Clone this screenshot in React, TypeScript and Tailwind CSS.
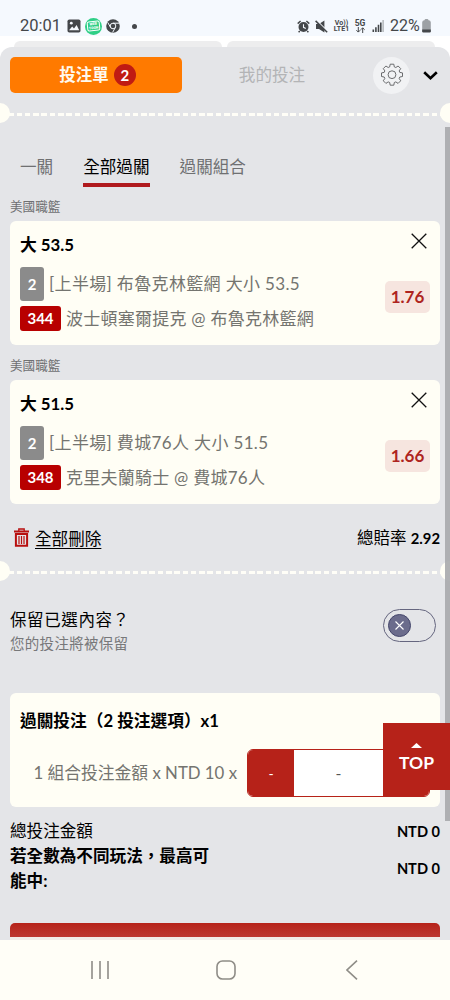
import { useState } from 'react'
import { clsx } from 'clsx'

interface Bet {
  league: string
  pick: string
  market: string
  code: string
  match: string
  odds: string
}

const BETS: Bet[] = [
  { league: '美國職籃', pick: '大 53.5', market: '[上半場] 布魯克林籃網 大小 53.5', code: '344', match: '波士頓塞爾提克 @ 布魯克林籃網', odds: '1.76' },
  { league: '美國職籃', pick: '大 51.5', market: '[上半場] 費城76人 大小 51.5', code: '348', match: '克里夫蘭騎士 @ 費城76人', odds: '1.66' },
]

const TABS = ['一關', '全部過關', '過關組合']

function StatusBar() {
  return (
    <div className="h-9 shrink-0 bg-[#f5f9fe] flex items-end pl-5 pr-[19px] text-[#44474a] font-[Roboto,sans-serif]">
      <div className="flex items-center h-[20px]">
        <span className="w-[40px] text-[16.5px] leading-5 whitespace-nowrap">20:01</span>
        <svg className="ml-[7px]" width="14" height="14" viewBox="0 0 14 14">
          <rect x=".5" y=".5" width="13" height="13" rx="1.8" fill="#44474a" />
          <circle cx="4.3" cy="4.2" r="1.4" fill="#f5f9fe" />
          <path d="M2 11.3 5.2 7.6 7 9.5 9.6 6.1 12.2 11.3Z" fill="#f5f9fe" />
        </svg>
        <span className="ml-[4px] w-[17px] h-[17px] rounded-full bg-[#2fcf86] flex items-center justify-center">
          <span className="w-[13px] h-[10px] -rotate-6 rounded-[2px] border border-white text-white font-black flex flex-col items-center justify-center">
            <span className="text-[3.5px] leading-[4px]">WEB</span>
            <span className="text-[3.5px] leading-[4px]">TOON</span>
          </span>
        </span>
        <svg className="ml-[4px]" width="14" height="14" viewBox="0 0 14 14">
          <circle cx="7" cy="7" r="6.8" fill="#44474a" />
          <g fill="none" stroke="#f5f9fe" strokeWidth="1">
            <circle cx="7" cy="7" r="2.8" />
            <path d="M7 4.2h6M4.6 8.4 1.7 3.4M9.4 8.4 6.6 13.4" />
          </g>
        </svg>
        <span className="ml-[12px] w-[5px] h-[5px] rounded-full bg-[#44474a]" />
      </div>
      <div className="ml-auto flex items-center h-[20px]">
        <svg width="13" height="13" viewBox="0 0 13 13">
          <circle cx="6.5" cy="7" r="5" fill="#44474a" />
          <path d="M.7 3.6 3.6 1M12.3 3.6 9.4 1M2.8 11 1.6 12.3M10.2 11l1.2 1.3" stroke="#44474a" strokeWidth="1.5" />
          <path d="M6.5 4.2V7.3L8.8 8.5" stroke="#f5f9fe" strokeWidth="1.1" fill="none" />
        </svg>
        <svg className="ml-[5px]" width="13" height="13" viewBox="0 0 13 13">
          <path d="M1 4h3l5.4-3.6v12L4 9H1z" fill="#44474a" />
          <path d="M1.4 .2 13 11.6" stroke="#f5f9fe" strokeWidth="1.2" />
          <path d="M.6 .9 12.2 12.3" stroke="#44474a" strokeWidth="1.5" />
        </svg>
        <span className="ml-[5px] w-[17px] text-[7px] leading-[6.5px] font-bold text-center whitespace-nowrap">Vo))<br />LTE1</span>
        <span className="ml-[4px] w-[12px] flex flex-col items-center">
          <span className="text-[8.5px] leading-[7px] font-bold">5G</span>
          <svg width="9" height="6" viewBox="0 0 9 6" fill="none" stroke="#44474a" strokeWidth="1">
            <path d="M2.3 0v5M.4 3.2l1.9 1.9 1.9-1.9M6.7 6V1M4.8 2.7 6.7.8l1.9 1.9" />
          </svg>
        </span>
        <svg className="ml-[6px]" width="12" height="12" viewBox="0 0 12 12" fill="#44474a">
          <path d="M.5 9.5h1.6V12H.5zM3.1 7.2h1.6V12H3.1zM5.7 4.8h1.6V12H5.7zM8 2.4h1.6V12H8z" />
          <path d="M10.4 0h1.4v12h-1.4z" fill="#aeb2b5" />
        </svg>
        <span className="ml-[6px] w-[30px] text-[16px] leading-5 whitespace-nowrap">22%</span>
        <svg className="ml-[2px]" width="9" height="14" viewBox="0 0 9 14">
          <path d="M2.5 1.2A1.2 1.2 0 0 1 3.5 0h2a1.2 1.2 0 0 1 1 1.2 2.2 2.2 0 0 1 2.3 2V13H.2V3.2a2.2 2.2 0 0 1 2.3-2z" fill="#9da1a5" />
          <path d="M.2 10.5h8.6v2a1 1 0 0 1-1 1H1.2a1 1 0 0 1-1-1z" fill="#44474a" />
        </svg>
      </div>
    </div>
  )
}

function TicketDivider() {
  return (
    <div className="relative h-[20px] -mx-[10px] shrink-0 flex items-center">
      <div className="w-full h-[3px] mt-[2px] bg-[repeating-linear-gradient(90deg,#fffef7_0_5.5px,transparent_5.5px_8.3px)]" />
      <span className="absolute -left-[10px] top-0 w-5 h-5 rounded-full bg-[#fffef5]" />
      <span className="absolute -right-[10px] top-0 w-5 h-5 rounded-full bg-[#fffef5]" />
    </div>
  )
}

function BetCard({ bet }: { bet: Bet }) {
  return (
    <div>
      <div className="h-7 pt-[1px] flex items-center text-[12.6px] text-[#6f7072]">{bet.league}</div>
      <div className="h-[124px] rounded-[6px] bg-[#fffef5] px-[10px] pt-[11px]">
        <div className="h-[25px] flex items-center justify-between">
          <span className="text-[16.8px] font-bold text-black">{bet.pick}</span>
          <button aria-label="close" className="mr-[3px] -mt-[8px]">
            <svg width="16" height="16" viewBox="0 0 16 16" stroke="#111" strokeWidth="1.3">
              <path d="M.7.7 15.3 15.3M15.3.7.7 15.3" />
            </svg>
          </button>
        </div>
        <div className="flex items-center justify-between mt-[10px]">
          <div className="text-[17px] text-[#74746f] whitespace-nowrap">
            <div className="h-[34px] flex items-center tracking-[.35px]">
              <span className="w-6 h-[34px] rounded-[3px] bg-[#8b8b8b] text-white text-[15px] tracking-normal font-bold flex items-center justify-center mr-[5px]">2</span>
              {bet.market}
            </div>
            <div className="h-[25px] mt-[5px] flex items-center tracking-[.25px]">
              <span className="w-[41px] h-[25px] rounded-[3px] bg-[#b80000] text-white text-[15px] tracking-normal font-bold flex items-center justify-center mr-[5px]">{bet.code}</span>
              {bet.match}
            </div>
          </div>
          <div className="w-[45px] h-8 -mt-[4px] rounded-[5px] bg-[#f6e5df] text-[#ae2420] text-[17px] font-bold flex items-center justify-center">{bet.odds}</div>
        </div>
      </div>
    </div>
  )
}

export default function App() {
  const [tab, setTab] = useState(TABS[1])
  const [keep, setKeep] = useState(false)

  return (
    <div className="w-[450px] h-[1000px] overflow-hidden flex flex-col bg-white font-[Lato,'Noto_Sans_CJK_TC',sans-serif] text-black">
      <StatusBar />
      <div className="h-[11px] shrink-0 pt-[5px] pl-[14px] pr-[15px] flex gap-[5px]">
        <div className="flex-1 h-full rounded-t-[6px] bg-[#ededee]" />
        <div className="flex-1 h-full rounded-t-[6px] bg-[#ededee]" />
      </div>

      <div className="relative h-[893px] shrink-0 rounded-t-[12px] bg-[#e4e5e8] px-[10px] overflow-hidden">
        {/* Header */}
        <div className="h-[56px] flex items-center">
          <button className="w-[172px] h-[35.5px] pl-[3px] rounded-[5px] bg-[#ff7a00] text-[#fff9ee] text-[16.5px] font-bold flex items-center justify-center">
            投注單
            <span className="ml-[5px] w-[22px] h-[22px] rounded-full bg-[#c01b13] text-[15px] text-white flex items-center justify-center">2</span>
          </button>
          <button className="w-[180px] pt-[1px] text-[16.6px] text-[#b3b4b6]">我的投注</button>
          <button className="ml-[11px] w-[37px] h-[37px] rounded-full bg-[#f1f2f4] flex items-center justify-center">
            <svg width="24" height="24" viewBox="0 0 24 24" fill="none" stroke="#5c5d60" strokeWidth=".9" strokeLinejoin="round">
              <path d="M9.7 3.9 10.2 1.2h3.6l.5 2.7 1.5.6 2.3-1.5 2.6 2.6-1.5 2.3.6 1.5 2.7.5v3.6l-2.7.5-.6 1.5 1.5 2.3-2.6 2.6-2.3-1.5-1.5.6-.5 2.7h-3.6l-.5-2.7-1.5-.6-2.3 1.5L3.3 17.8l1.5-2.3-.6-1.5-2.7-.5V9.9l2.7-.5.6-1.5L3.3 5.6 5.900 3l2.300 1.500z" />
              <circle cx="12" cy="11.7" r="3.9" />
            </svg>
          </button>
          <svg className="ml-[13px]" width="15" height="9" viewBox="0 0 15 9" fill="none" stroke="#000" strokeWidth="2.6">
            <path d="M1.2 1.2 7.5 7.2 13.8 1.2" />
          </svg>
        </div>
        <TicketDivider />

        {/* Tabs */}
        <div className="h-[24px]" />
        <div className="h-[40px] pl-[10px] flex gap-[30px]">
          {TABS.map(t => (
            <button
              key={t}
              onClick={() => setTab(t)}
              className={clsx(
                'h-full border-b-4 pt-[1px] text-[16.6px] leading-[38px] whitespace-nowrap',
                t === tab ? 'border-[#b01a1e] text-black' : 'border-transparent text-[#6f7072]'
              )}
            >
              {t}
            </button>
          ))}
        </div>

        <div className="pt-[6px] flex flex-col gap-[7px]">
          {BETS.map(b => <BetCard key={b.code} bet={b} />)}
        </div>

        {/* Clear all / total odds */}
        <div className="h-[57px] pt-[12px] flex items-center justify-between">
          <button className="flex items-center pl-[4px] text-[16.6px] leading-6">
            <svg className="mr-[6px] mb-[2px]" width="15" height="19" viewBox="0 0 15 19" fill="none" stroke="#b80f0f">
              <path d="M0 3.5h15" strokeWidth="2" />
              <path d="M4.8 3V1h5.4v2" strokeWidth="1.3" />
              <path d="M1.9 6v11.8h11.2V6z" strokeWidth="2" />
              <path d="M5 8v8M7.5 8v8M10 8v8" strokeWidth="1.2" />
            </svg>
            <span className="underline underline-offset-[3px] decoration-1">全部刪除</span>
          </button>
          <div className="text-[16.5px]">總賠率 <span className="text-[14.8px] font-bold">2.92</span></div>
        </div>
        <TicketDivider />

        {/* Keep selection */}
        <div className="h-[112px] pt-[27px] flex items-start justify-between">
          <div>
            <div className="text-[16.5px] tracking-[.6px] leading-6">保留已選內容？</div>
            <div className="text-[14.5px] tracking-[.3px] leading-[23px] text-[#77787a]">您的投注將被保留</div>
          </div>
          <button
            onClick={() => setKeep(!keep)}
            className={clsx('mt-[1px] mr-[4px] w-[53px] h-[33px] rounded-full border border-[#65667f] flex items-center px-[4px]', keep && 'justify-end')}
          >
            <span className="w-[23px] h-[23px] rounded-full bg-[#6b6c8c] border border-[#44466b] flex items-center justify-center">
              <svg width="9" height="9" viewBox="0 0 9 9" stroke="#fff" strokeWidth="1.1"><path d="M.5.5 8.5 8.5M8.5.5.5 8.5" /></svg>
            </span>
          </button>
        </div>

        {/* Stake */}
        <div className="h-[114px] rounded-[6px] bg-[#fffef5] px-[10px] pt-[16px]">
          <div className="h-[25px] flex items-center text-[16.7px] font-bold">過關投注（2 投注選項）x1</div>
          <div className="mt-[15px] h-[48px] flex items-center justify-end">
            <span className="mr-[10px] text-[16.8px] text-[#74746f] whitespace-nowrap">1 組合投注金額 x NTD 10 x</span>
            <div className="w-[183px] h-[48px] shrink-0 rounded-[6px] border border-[#b62219] bg-white flex overflow-hidden text-[#555]">
              <button aria-label="minus" className="w-[46px] bg-[#b62219] text-white text-[14px]">-</button>
              <span className="flex-1 flex items-center justify-center">-</span>
              <button aria-label="plus" className="w-[46px] bg-[#b62219]" />
            </div>
          </div>
        </div>

        {/* Totals */}
        <div className="pt-[12px] text-[16.6px] leading-[25px]">
          <div className="flex items-center justify-between">
            <span>總投注金額</span>
            <span className="-mt-[1px] text-[14.6px] font-bold">NTD 0</span>
          </div>
          <div className="flex items-center justify-between font-bold">
            <span className="w-[205px]">若全數為不同玩法，最高可能中:</span>
            <span className="-mt-[2px] text-[14.6px]">NTD 0</span>
          </div>
        </div>
        <div className="mt-[29px] h-[14px] rounded-t-[5px] bg-linear-to-b from-[#b62219] to-[#bd3932]" />
        <div className="h-[3px] bg-[#f1eeea]" />

        <div className="absolute right-0 top-[80px] w-[5px] h-[694px] bg-[#a7a9ac]/90" />
        <button className="absolute right-0 top-[676px] w-[67px] h-[67px] bg-[#b62219] text-white text-[17.5px] font-bold leading-5 flex flex-col items-center pt-[20px]">
          <svg width="11" height="5" viewBox="0 0 11 5" fill="#fff"><path d="M0 5 5.5 0 11 5z" /></svg>
          <span className="mt-[5px]">TOP</span>
        </button>
      </div>

      {/* Navigation bar */}
      <div className="flex-1 bg-[#fffef7] flex items-center pl-[91px]">
        <svg width="18" height="20" viewBox="0 0 18 20" stroke="#8f8d87" strokeWidth="1.6"><path d="M1 1v18M9 1v18M17 1v18" /></svg>
        <svg className="ml-[107px]" width="20" height="20" viewBox="0 0 20 20" fill="none" stroke="#8f8d87" strokeWidth="1.6"><rect x="1" y="1" width="18" height="18" rx="5.5" /></svg>
        <svg className="ml-[110px]" width="12" height="20" viewBox="0 0 12 20" fill="none" stroke="#8f8d87" strokeWidth="1.6"><path d="M11 .7 1 10 11 19.3" /></svg>
      </div>
    </div>
  )
}
